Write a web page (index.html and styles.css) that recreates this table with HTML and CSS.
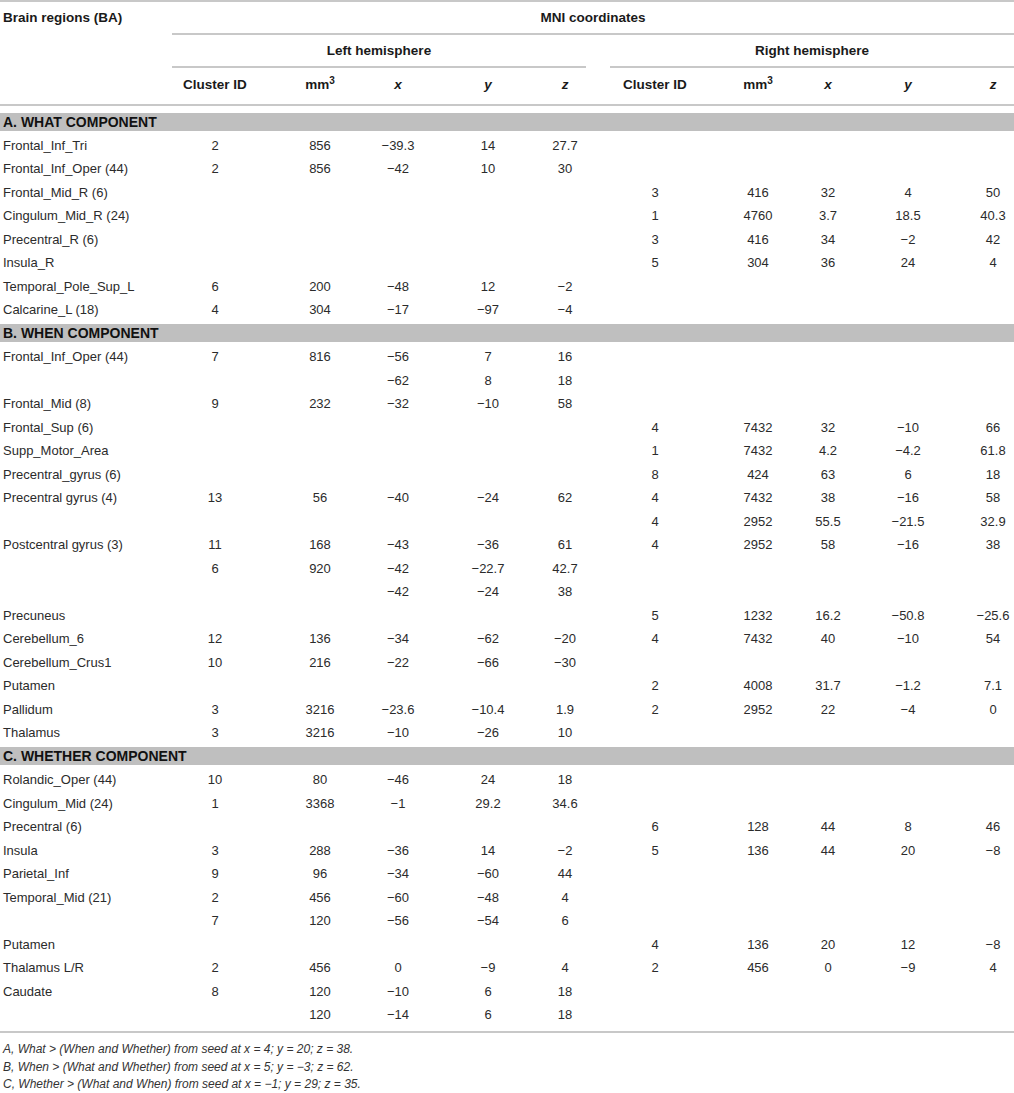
FILE: index.html
```html
<!DOCTYPE html>
<html lang="en">
<head>
<meta charset="utf-8">
<title>MNI coordinates table</title>
<link rel="stylesheet" href="styles.css">
</head>
<body>
<div class="table">
  <div class="head">
    <div class="head-top grid">
      <div class="brain">Brain regions (BA)</div>
      <div class="mni">MNI coordinates</div>
      <div class="hemi hemi-left">Left hemisphere</div>
      <div class="hemi hemi-right">Right hemisphere</div>
    </div>
    <div class="colhead grid">
      <div></div><div>Cluster ID</div><div>mm<sup>3</sup></div><div><i>x</i></div><div><i>y</i></div><div><i>z</i></div>
      <div>Cluster ID</div><div>mm<sup>3</sup></div><div><i>x</i></div><div><i>y</i></div><div><i>z</i></div>
    </div>
  </div>

  <div class="body">
    <div class="band"><span>A. WHAT COMPONENT</span></div>
    <div class="row grid"><div>Frontal_Inf_Tri</div><div>2</div><div>856</div><div>−39.3</div><div>14</div><div>27.7</div><div></div><div></div><div></div><div></div><div></div></div>
    <div class="row grid"><div>Frontal_Inf_Oper (44)</div><div>2</div><div>856</div><div>−42</div><div>10</div><div>30</div><div></div><div></div><div></div><div></div><div></div></div>
    <div class="row grid"><div>Frontal_Mid_R (6)</div><div></div><div></div><div></div><div></div><div></div><div>3</div><div>416</div><div>32</div><div>4</div><div>50</div></div>
    <div class="row grid"><div>Cingulum_Mid_R (24)</div><div></div><div></div><div></div><div></div><div></div><div>1</div><div>4760</div><div>3.7</div><div>18.5</div><div>40.3</div></div>
    <div class="row grid"><div>Precentral_R (6)</div><div></div><div></div><div></div><div></div><div></div><div>3</div><div>416</div><div>34</div><div>−2</div><div>42</div></div>
    <div class="row grid"><div>Insula_R</div><div></div><div></div><div></div><div></div><div></div><div>5</div><div>304</div><div>36</div><div>24</div><div>4</div></div>
    <div class="row grid"><div>Temporal_Pole_Sup_L</div><div>6</div><div>200</div><div>−48</div><div>12</div><div>−2</div><div></div><div></div><div></div><div></div><div></div></div>
    <div class="row grid"><div>Calcarine_L (18)</div><div>4</div><div>304</div><div>−17</div><div>−97</div><div>−4</div><div></div><div></div><div></div><div></div><div></div></div>

    <div class="band"><span>B. WHEN COMPONENT</span></div>
    <div class="row grid"><div>Frontal_Inf_Oper (44)</div><div>7</div><div>816</div><div>−56</div><div>7</div><div>16</div><div></div><div></div><div></div><div></div><div></div></div>
    <div class="row grid"><div></div><div></div><div></div><div>−62</div><div>8</div><div>18</div><div></div><div></div><div></div><div></div><div></div></div>
    <div class="row grid"><div>Frontal_Mid (8)</div><div>9</div><div>232</div><div>−32</div><div>−10</div><div>58</div><div></div><div></div><div></div><div></div><div></div></div>
    <div class="row grid"><div>Frontal_Sup (6)</div><div></div><div></div><div></div><div></div><div></div><div>4</div><div>7432</div><div>32</div><div>−10</div><div>66</div></div>
    <div class="row grid"><div>Supp_Motor_Area</div><div></div><div></div><div></div><div></div><div></div><div>1</div><div>7432</div><div>4.2</div><div>−4.2</div><div>61.8</div></div>
    <div class="row grid"><div>Precentral_gyrus (6)</div><div></div><div></div><div></div><div></div><div></div><div>8</div><div>424</div><div>63</div><div>6</div><div>18</div></div>
    <div class="row grid"><div>Precentral gyrus (4)</div><div>13</div><div>56</div><div>−40</div><div>−24</div><div>62</div><div>4</div><div>7432</div><div>38</div><div>−16</div><div>58</div></div>
    <div class="row grid"><div></div><div></div><div></div><div></div><div></div><div></div><div>4</div><div>2952</div><div>55.5</div><div>−21.5</div><div>32.9</div></div>
    <div class="row grid"><div>Postcentral gyrus (3)</div><div>11</div><div>168</div><div>−43</div><div>−36</div><div>61</div><div>4</div><div>2952</div><div>58</div><div>−16</div><div>38</div></div>
    <div class="row grid"><div></div><div>6</div><div>920</div><div>−42</div><div>−22.7</div><div>42.7</div><div></div><div></div><div></div><div></div><div></div></div>
    <div class="row grid"><div></div><div></div><div></div><div>−42</div><div>−24</div><div>38</div><div></div><div></div><div></div><div></div><div></div></div>
    <div class="row grid"><div>Precuneus</div><div></div><div></div><div></div><div></div><div></div><div>5</div><div>1232</div><div>16.2</div><div>−50.8</div><div>−25.6</div></div>
    <div class="row grid"><div>Cerebellum_6</div><div>12</div><div>136</div><div>−34</div><div>−62</div><div>−20</div><div>4</div><div>7432</div><div>40</div><div>−10</div><div>54</div></div>
    <div class="row grid"><div>Cerebellum_Crus1</div><div>10</div><div>216</div><div>−22</div><div>−66</div><div>−30</div><div></div><div></div><div></div><div></div><div></div></div>
    <div class="row grid"><div>Putamen</div><div></div><div></div><div></div><div></div><div></div><div>2</div><div>4008</div><div>31.7</div><div>−1.2</div><div>7.1</div></div>
    <div class="row grid"><div>Pallidum</div><div>3</div><div>3216</div><div>−23.6</div><div>−10.4</div><div>1.9</div><div>2</div><div>2952</div><div>22</div><div>−4</div><div>0</div></div>
    <div class="row grid"><div>Thalamus</div><div>3</div><div>3216</div><div>−10</div><div>−26</div><div>10</div><div></div><div></div><div></div><div></div><div></div></div>

    <div class="band"><span>C. WHETHER COMPONENT</span></div>
    <div class="row grid"><div>Rolandic_Oper (44)</div><div>10</div><div>80</div><div>−46</div><div>24</div><div>18</div><div></div><div></div><div></div><div></div><div></div></div>
    <div class="row grid"><div>Cingulum_Mid (24)</div><div>1</div><div>3368</div><div>−1</div><div>29.2</div><div>34.6</div><div></div><div></div><div></div><div></div><div></div></div>
    <div class="row grid"><div>Precentral (6)</div><div></div><div></div><div></div><div></div><div></div><div>6</div><div>128</div><div>44</div><div>8</div><div>46</div></div>
    <div class="row grid"><div>Insula</div><div>3</div><div>288</div><div>−36</div><div>14</div><div>−2</div><div>5</div><div>136</div><div>44</div><div>20</div><div>−8</div></div>
    <div class="row grid"><div>Parietal_Inf</div><div>9</div><div>96</div><div>−34</div><div>−60</div><div>44</div><div></div><div></div><div></div><div></div><div></div></div>
    <div class="row grid"><div>Temporal_Mid (21)</div><div>2</div><div>456</div><div>−60</div><div>−48</div><div>4</div><div></div><div></div><div></div><div></div><div></div></div>
    <div class="row grid"><div></div><div>7</div><div>120</div><div>−56</div><div>−54</div><div>6</div><div></div><div></div><div></div><div></div><div></div></div>
    <div class="row grid"><div>Putamen</div><div></div><div></div><div></div><div></div><div></div><div>4</div><div>136</div><div>20</div><div>12</div><div>−8</div></div>
    <div class="row grid"><div>Thalamus L/R</div><div>2</div><div>456</div><div>0</div><div>−9</div><div>4</div><div>2</div><div>456</div><div>0</div><div>−9</div><div>4</div></div>
    <div class="row grid"><div>Caudate</div><div>8</div><div>120</div><div>−10</div><div>6</div><div>18</div><div></div><div></div><div></div><div></div><div></div></div>
    <div class="row grid"><div></div><div></div><div>120</div><div>−14</div><div>6</div><div>18</div><div></div><div></div><div></div><div></div><div></div></div>
  </div>

  <div class="notes">
    <p>A, What &gt; (When and Whether) from seed at x = 4; y = 20; z = 38.</p>
    <p>B, When &gt; (What and Whether) from seed at x = 5; y = −3; z = 62.</p>
    <p>C, Whether &gt; (What and When) from seed at x = −1; y = 29; z = 35.</p>
  </div>
</div>
</body>
</html>
```

FILE: styles.css
```css
* { box-sizing: border-box; }

html, body {
  margin: 0;
  padding: 0;
  background: #ffffff;
}

body {
  font-family: "Liberation Sans", Arial, Helvetica, sans-serif;
  font-size: 13px;
  color: #2b2b2b;
}

.table {
  width: 1014px;
}

.grid {
  display: grid;
  grid-template-columns: 172px 86px 23px 78px 78px 12.5px 77px 17.5px 42px 24px 90px 23px 70px 70px 5px 80px 24px 1fr;
}

/* header */
.head {
  border-top: 2px solid #c8c8c8;
  border-bottom: 2px solid #c8c8c8;
  font-weight: bold;
  font-size: 13.5px;
  color: #1a1a1a;
}

.head-top {
  grid-template-rows: 33px 33px;
}

.brain {
  grid-column: 1;
  grid-row: 1 / 3;
  align-self: start;
  padding-left: 3px;
  line-height: 31px;
}

.mni {
  grid-column: 2 / -1;
  grid-row: 1;
  border-bottom: 2px solid #c8c8c8;
  text-align: center;
  line-height: 31px;
}

.hemi {
  grid-row: 2;
  border-bottom: 2px solid #c8c8c8;
  text-align: center;
  line-height: 31px;
}

.hemi-left { grid-column: 2 / 10; }
.hemi-right { grid-column: 11 / -1; }

.colhead {
  height: 36px;
  padding-bottom: 4px;
  align-items: center;
}

.colhead > * {
  text-align: center;
  white-space: nowrap;
}

.colhead sup {
  font-size: 10px;
  line-height: 0;
  vertical-align: 5px;
}

/* column placement shared by header and rows */
.colhead > :nth-child(1), .row > :nth-child(1) { grid-column: 1; }
.colhead > :nth-child(2), .row > :nth-child(2) { grid-column: 2; }
.colhead > :nth-child(3), .row > :nth-child(3) { grid-column: 4; }
.colhead > :nth-child(4), .row > :nth-child(4) { grid-column: 5; }
.colhead > :nth-child(5), .row > :nth-child(5) { grid-column: 7; }
.colhead > :nth-child(6), .row > :nth-child(6) { grid-column: 9; }
.colhead > :nth-child(7), .row > :nth-child(7) { grid-column: 11; }
.colhead > :nth-child(8), .row > :nth-child(8) { grid-column: 13; }
.colhead > :nth-child(9), .row > :nth-child(9) { grid-column: 14; }
.colhead > :nth-child(10), .row > :nth-child(10) { grid-column: 16; }
.colhead > :nth-child(11), .row > :nth-child(11) { grid-column: 18; }

/* body */
.body {
  padding: 4px 0 4.5px;
  border-bottom: 2px solid #c8c8c8;
}

.row {
  height: 23.5px;
  align-items: center;
}

.row > * {
  text-align: center;
  white-space: nowrap;
}

.row > :first-child {
  text-align: left;
  padding-left: 3px;
}

.band {
  height: 23.5px;
  display: flex;
  align-items: center;
}

.band span {
  display: flex;
  align-items: center;
  width: 100%;
  height: 18px;
  padding-left: 3px;
  background: #bfbfbf;
  font-weight: bold;
  font-size: 14px;
  color: #111;
}

/* footnotes */
.notes {
  padding-top: 7px;
  padding-left: 3px;
  font-size: 12px;
  font-style: italic;
  color: #333;
}

.notes p {
  margin: 0;
  line-height: 18px;
}

.notes p:last-child {
  line-height: 16px;
}
```
